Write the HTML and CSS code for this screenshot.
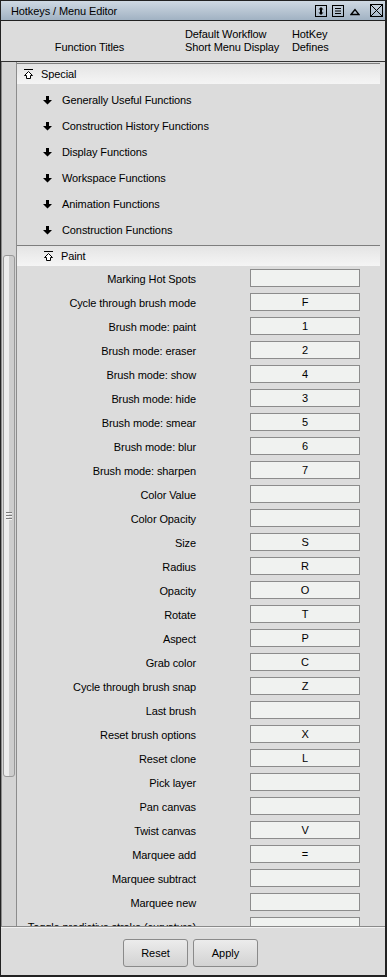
FILE: index.html
```html
<!DOCTYPE html>
<html lang="en">
<head>
    <meta charset="UTF-8">
    <title>Hotkeys / Menu Editor</title>
    <link rel="stylesheet" href="styles.css">
</head>
<body>

<div class="window">
    <div class="titlebar">
        <span class="title">Hotkeys / Menu Editor</span>
        <div class="title-icons">
            <svg width="12" height="12" viewBox="0 0 12 12">
                <rect x="0.5" y="0.5" width="11" height="11" fill="none" stroke="#000"/>
                <rect x="5" y="3" width="2" height="6" fill="#000"/>
                <polygon points="3.5,4.5 6,2 8.5,4.5" fill="#000"/>
                <polygon points="3.5,7.5 6,10 8.5,7.5" fill="#000"/>
            </svg>
            <svg width="12" height="12" viewBox="0 0 12 12">
                <rect x="0.5" y="0.5" width="11" height="11" fill="none" stroke="#000"/>
                <path d="M3 3.5h6M3 6h6M3 8.5h6" stroke="#000"/>
            </svg>
            <svg class="tri" width="10" height="12" viewBox="0 0 10 12">
                <polygon points="1,9.5 5,4.5 9,9.5" fill="none" stroke="#000" stroke-width="1.4"/>
            </svg>
            <svg width="13" height="13" viewBox="0 0 13 13">
                <rect x="0.5" y="0.5" width="12" height="12" fill="none" stroke="#000"/>
                <path d="M1 1L12 12M12 1L1 12" stroke="#000"/>
            </svg>
        </div>
    </div>

    <div class="colheads">
        <div class="col-title">Function Titles</div>
        <div class="col-menu">Default Workflow<br>Short Menu Display</div>
        <div class="col-key">HotKey<br>Defines</div>
    </div>

    <div class="scroller">
        <div class="scrollbar">
            <div class="thumb">
                <span class="grip"></span>
                <span class="grip"></span>
                <span class="grip"></span>
            </div>
        </div>

        <div class="content">
            <div class="section-head">
                <svg class="open-icon" width="11" height="10" viewBox="0 0 11 10">
                    <path d="M1 0.5h9" stroke="#000"/>
                    <polygon points="5.5,2.5 9.5,6.5 7.5,6.5 7.5,9.5 3.5,9.5 3.5,6.5 1.5,6.5" fill="#fff" stroke="#000"/>
                </svg>
                <span>Special</span>
            </div>
            <ul class="groups">
                <li><svg class="down" width="9" height="9" viewBox="0 0 9 9"><polygon points="3,0 6,0 6,4 9,4 4.5,8.5 0,4 3,4"/></svg>Generally Useful Functions</li>
                <li><svg class="down" width="9" height="9" viewBox="0 0 9 9"><polygon points="3,0 6,0 6,4 9,4 4.5,8.5 0,4 3,4"/></svg>Construction History Functions</li>
                <li><svg class="down" width="9" height="9" viewBox="0 0 9 9"><polygon points="3,0 6,0 6,4 9,4 4.5,8.5 0,4 3,4"/></svg>Display Functions</li>
                <li><svg class="down" width="9" height="9" viewBox="0 0 9 9"><polygon points="3,0 6,0 6,4 9,4 4.5,8.5 0,4 3,4"/></svg>Workspace Functions</li>
                <li><svg class="down" width="9" height="9" viewBox="0 0 9 9"><polygon points="3,0 6,0 6,4 9,4 4.5,8.5 0,4 3,4"/></svg>Animation Functions</li>
                <li><svg class="down" width="9" height="9" viewBox="0 0 9 9"><polygon points="3,0 6,0 6,4 9,4 4.5,8.5 0,4 3,4"/></svg>Construction Functions</li>
            </ul>

            <div class="section-head sub">
                <svg class="open-icon" width="11" height="10" viewBox="0 0 11 10">
                    <path d="M1 0.5h9" stroke="#000"/>
                    <polygon points="5.5,2.5 9.5,6.5 7.5,6.5 7.5,9.5 3.5,9.5 3.5,6.5 1.5,6.5" fill="#fff" stroke="#000"/>
                </svg>
                <span>Paint</span>
            </div>

            <div class="hk-rows">
                <div class="hk-row"><span class="hk-label">Marking Hot Spots</span><span class="hk-key"></span></div>
                <div class="hk-row"><span class="hk-label">Cycle through brush mode</span><span class="hk-key">F</span></div>
                <div class="hk-row"><span class="hk-label">Brush mode: paint</span><span class="hk-key">1</span></div>
                <div class="hk-row"><span class="hk-label">Brush mode: eraser</span><span class="hk-key">2</span></div>
                <div class="hk-row"><span class="hk-label">Brush mode: show</span><span class="hk-key">4</span></div>
                <div class="hk-row"><span class="hk-label">Brush mode: hide</span><span class="hk-key">3</span></div>
                <div class="hk-row"><span class="hk-label">Brush mode: smear</span><span class="hk-key">5</span></div>
                <div class="hk-row"><span class="hk-label">Brush mode: blur</span><span class="hk-key">6</span></div>
                <div class="hk-row"><span class="hk-label">Brush mode: sharpen</span><span class="hk-key">7</span></div>
                <div class="hk-row"><span class="hk-label">Color Value</span><span class="hk-key"></span></div>
                <div class="hk-row"><span class="hk-label">Color Opacity</span><span class="hk-key"></span></div>
                <div class="hk-row"><span class="hk-label">Size</span><span class="hk-key">S</span></div>
                <div class="hk-row"><span class="hk-label">Radius</span><span class="hk-key">R</span></div>
                <div class="hk-row"><span class="hk-label">Opacity</span><span class="hk-key">O</span></div>
                <div class="hk-row"><span class="hk-label">Rotate</span><span class="hk-key">T</span></div>
                <div class="hk-row"><span class="hk-label">Aspect</span><span class="hk-key">P</span></div>
                <div class="hk-row"><span class="hk-label">Grab color</span><span class="hk-key">C</span></div>
                <div class="hk-row"><span class="hk-label">Cycle through brush snap</span><span class="hk-key">Z</span></div>
                <div class="hk-row"><span class="hk-label">Last brush</span><span class="hk-key"></span></div>
                <div class="hk-row"><span class="hk-label">Reset brush options</span><span class="hk-key">X</span></div>
                <div class="hk-row"><span class="hk-label">Reset clone</span><span class="hk-key">L</span></div>
                <div class="hk-row"><span class="hk-label">Pick layer</span><span class="hk-key"></span></div>
                <div class="hk-row"><span class="hk-label">Pan canvas</span><span class="hk-key"></span></div>
                <div class="hk-row"><span class="hk-label">Twist canvas</span><span class="hk-key">V</span></div>
                <div class="hk-row"><span class="hk-label">Marquee add</span><span class="hk-key">=</span></div>
                <div class="hk-row"><span class="hk-label">Marquee subtract</span><span class="hk-key"></span></div>
                <div class="hk-row"><span class="hk-label">Marquee new</span><span class="hk-key"></span></div>
                <div class="hk-row"><span class="hk-label">Toggle predictive stroke (curvature)</span><span class="hk-key"></span></div>
            </div>
        </div>
    </div>

    <div class="footer">
        <button class="btn">Reset</button>
        <button class="btn">Apply</button>
    </div>
</div>

</body>
</html>
```

FILE: styles.css
```css
body {
    margin: 0;
    padding: 0;
    font-family: "Liberation Sans", Arial, sans-serif;
    font-size: 11px;
    letter-spacing: -0.1px;
    color: #000;
    background-color: #dcdcdc;
}
.window {
    width: 387px;
    height: 977px;
    box-sizing: border-box;
    border: solid #222;
    border-width: 1px 2px 2px 1px;
    background-color: #dcdcdc;
    display: flex;
    flex-direction: column;
    overflow: hidden;
}

/* title bar */
.titlebar {
    height: 19px;
    flex-shrink: 0;
    border-bottom: 1px solid #222;
    background: linear-gradient(#cfd9e3, #a1b2c3);
    display: flex;
    align-items: center;
    padding: 0 2px 0 10px;
}
.title {
    flex: 1;
    padding-top: 1px;
}
.title-icons {
    display: flex;
    align-items: center;
    gap: 5px;
}
.title-icons .tri {
    margin: 0 5px 0 1px;
}

/* column headings */
.colheads {
    height: 33px;
    flex-shrink: 0;
    padding-bottom: 7px;
    border-bottom: 1px solid #333;
    display: grid;
    grid-template-columns: 177px 100px auto;
    column-gap: 7px;
    align-items: end;
    line-height: 13px;
}
.col-title {
    text-align: center;
}

/* scrolling list */
.scroller {
    height: 864px;
    flex-shrink: 0;
    display: flex;
    overflow: hidden;
}
.scrollbar {
    width: 14px;
    flex-shrink: 0;
    border-left: 1px solid #8c8c8c;
    border-right: 1px solid #8c8c8c;
    background-color: #d4d4d4;
}
.thumb {
    margin: 193px 0 0 1px;
    width: 10px;
    height: 520px;
    border: 1px solid #999;
    border-radius: 3px;
    background: linear-gradient(to right, #ececec 50%, #cdcdcd 50%);
    display: flex;
    flex-direction: column;
    align-items: center;
    justify-content: center;
    gap: 1px;
}
.grip {
    width: 6px;
    height: 1px;
    background-color: #7a7a7a;
    border-bottom: 1px solid #f2f2f2;
}
.content {
    flex: 1;
    padding-top: 1px;
    overflow: hidden;
}
.section-head {
    margin-right: 5px;
    height: 20px;
    border-top: 1px solid #7e7e7e;
    background: linear-gradient(#e4e4e4, #f5f5f5);
    display: flex;
    align-items: center;
    gap: 7px;
    padding-left: 6px;
}
.section-head.sub {
    margin-top: 2px;
    padding-left: 26px;
}
.groups {
    list-style: none;
    margin: 3px 0 0 0;
    padding: 0;
}
.groups li {
    height: 26px;
    display: flex;
    align-items: center;
    gap: 10px;
    padding-left: 26px;
}
.down {
    fill: #000;
}

/* hotkey rows */
.hk-row {
    height: 24px;
    display: flex;
    align-items: flex-start;
}
.hk-label {
    width: 179px;
    flex-shrink: 0;
    text-align: right;
    line-height: 24px;
    padding-top: 1px;
    white-space: nowrap;
}
.hk-key {
    margin: 3px 0 0 54px;
    width: 108px;
    height: 16px;
    flex-shrink: 0;
    border: 1px solid #8c8c8c;
    background-color: #f0f2f0;
    text-align: center;
    line-height: 17px;
}

/* buttons */
.footer {
    flex: 1;
    border-top: 1px solid #8a8a8a;
    box-shadow: inset 0 1px #f2f2f2;
    display: flex;
    justify-content: center;
    align-items: flex-start;
    gap: 5px;
    padding: 12px 5px 0 0;
}
.btn {
    width: 65px;
    height: 28px;
    border: 1px solid #8a8a8a;
    border-radius: 3px;
    background: linear-gradient(#ececec, #d2d2d2);
    font-family: "Liberation Sans", Arial, sans-serif;
    font-size: 11px;
    color: #000;
    padding: 0;
}
```
